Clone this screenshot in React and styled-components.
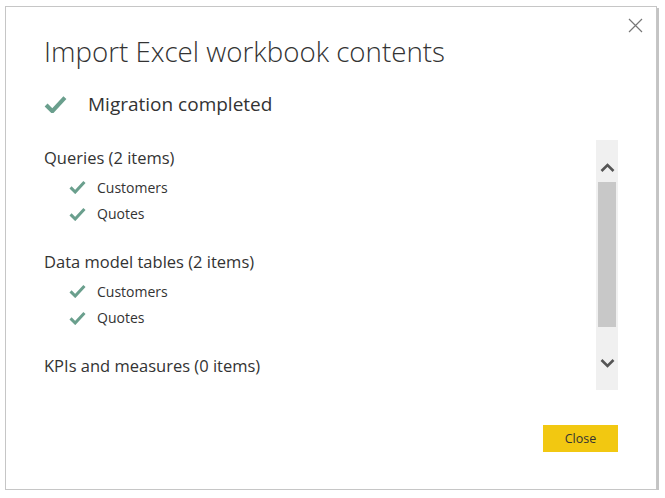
import React from "react";
import styled, { createGlobalStyle } from "styled-components";

const Global = createGlobalStyle`
  html, body { margin: 0; padding: 0; background: #fff; }
  body { font-family: "Open Sans", "Noto Sans", sans-serif; }
`;

const Dialog = styled.div`
  position: relative;
  box-sizing: border-box;
  margin: 6px 0 0 5px;
  width: 652px;
  height: 484px;
  border: 1px solid #c6c6c6;
  box-shadow: 2px 2px 0 #c4c4c4;
  background: #fff;
  padding: 26px 38px 0 38px;
  display: flex;
  flex-direction: column;
`;

const CloseX = styled.button`
  position: absolute;
  top: 9px;
  right: 12px;
  width: 18px;
  height: 18px;
  padding: 0;
  border: 0;
  background: transparent;
  display: flex;
  align-items: center;
  justify-content: center;
`;

const Title = styled.h1`
  margin: 0;
  font-family: "Open Sans", sans-serif;
  font-weight: 300;
  font-size: 27.7px;
  line-height: 36px;
  color: #333;
`;

const Status = styled.div`
  display: flex;
  align-items: center;
  margin-top: 22px;
  height: 26px;
  gap: 21px;
  font-size: 19px;
  color: #333;
`;

const Body = styled.div`
  display: flex;
  margin-top: 23px;
  height: 250px;
`;

const List = styled.div`
  flex: 1;
  padding-top: 7px;
`;

const Section = styled.div`
  margin-bottom: 24px;
`;

const SectionTitle = styled.div`
  font-size: 16.5px;
  line-height: 22px;
  color: #333;
`;

const Items = styled.div`
  display: flex;
  flex-direction: column;
  padding-left: 25px;
  margin-top: 5px;
`;

const Item = styled.div`
  display: flex;
  align-items: center;
  gap: 11px;
  height: 26.5px;
  font-size: 14px;
  color: #333;
`;

const Scrollbar = styled.div`
  width: 22px;
  background: #f0f0f0;
  display: flex;
  flex-direction: column;
  align-items: center;
`;

const Arrow = styled.div`
  height: 42px;
  width: 100%;
  display: flex;
  align-items: ${(p) => (p.$down ? "flex-start" : "flex-end")};
  justify-content: center;
  padding: ${(p) => (p.$down ? "10px 0 0" : "0 0 9px")};
  box-sizing: border-box;
`;

const Thumb = styled.div`
  width: 18px;
  height: 145px;
  background: #c8c8c8;
`;

const Spacer = styled.div`
  flex: 1;
`;

const Footer = styled.div`
  display: flex;
  justify-content: flex-end;
  margin-top: 35px;
`;

const Button = styled.button`
  width: 75px;
  height: 27px;
  border: 0;
  background: #f2c811;
  color: #333;
  font-family: "Open Sans", sans-serif;
  font-size: 12.5px;
  padding: 0;
`;

const Check = ({ size = 17 }) => (
  <svg width={size} height={size * 0.82} viewBox="0 0 22 18" style={{ flex: "none" }}>
    <path d="M2 9.5 L8 15.5 L20 2.5" fill="none" stroke="#6a9f8d" strokeWidth="3.9" strokeLinecap="butt" strokeLinejoin="miter" />
  </svg>
);

const Chevron = ({ down }) => (
  <svg width="15" height="10" viewBox="0 0 15 10">
    <path d={down ? "M1.5 2 L7.5 8 L13.5 2" : "M1.5 8 L7.5 2 L13.5 8"} fill="none" stroke="#555" strokeWidth="2.6" />
  </svg>
);

const sections = [
  { title: "Queries (2 items)", items: ["Customers", "Quotes"] },
  { title: "Data model tables (2 items)", items: ["Customers", "Quotes"] },
  { title: "KPIs and measures (0 items)", items: [] },
];

export default function App() {
  return (
    <>
      <Global />
      <Dialog>
        <CloseX aria-label="Close">
          <svg width="15" height="15" viewBox="0 0 15 15">
            <path d="M1 1 L14 14 M14 1 L1 14" stroke="#777" strokeWidth="1.2" />
          </svg>
        </CloseX>
        <Title>Import Excel workbook contents</Title>
        <Status>
          <Check size={23} />
          <span>Migration completed</span>
        </Status>
        <Body>
          <List>
            {sections.map((s) => (
              <Section key={s.title}>
                <SectionTitle>{s.title}</SectionTitle>
                {s.items.length > 0 && (
                  <Items>
                    {s.items.map((it) => (
                      <Item key={it}>
                        <Check />
                        <span>{it}</span>
                      </Item>
                    ))}
                  </Items>
                )}
              </Section>
            ))}
          </List>
          <Scrollbar>
            <Arrow>
              <Chevron />
            </Arrow>
            <Thumb />
            <Spacer />
            <Arrow $down>
              <Chevron down />
            </Arrow>
          </Scrollbar>
        </Body>
        <Footer>
          <Button>Close</Button>
        </Footer>
      </Dialog>
    </>
  );
}
